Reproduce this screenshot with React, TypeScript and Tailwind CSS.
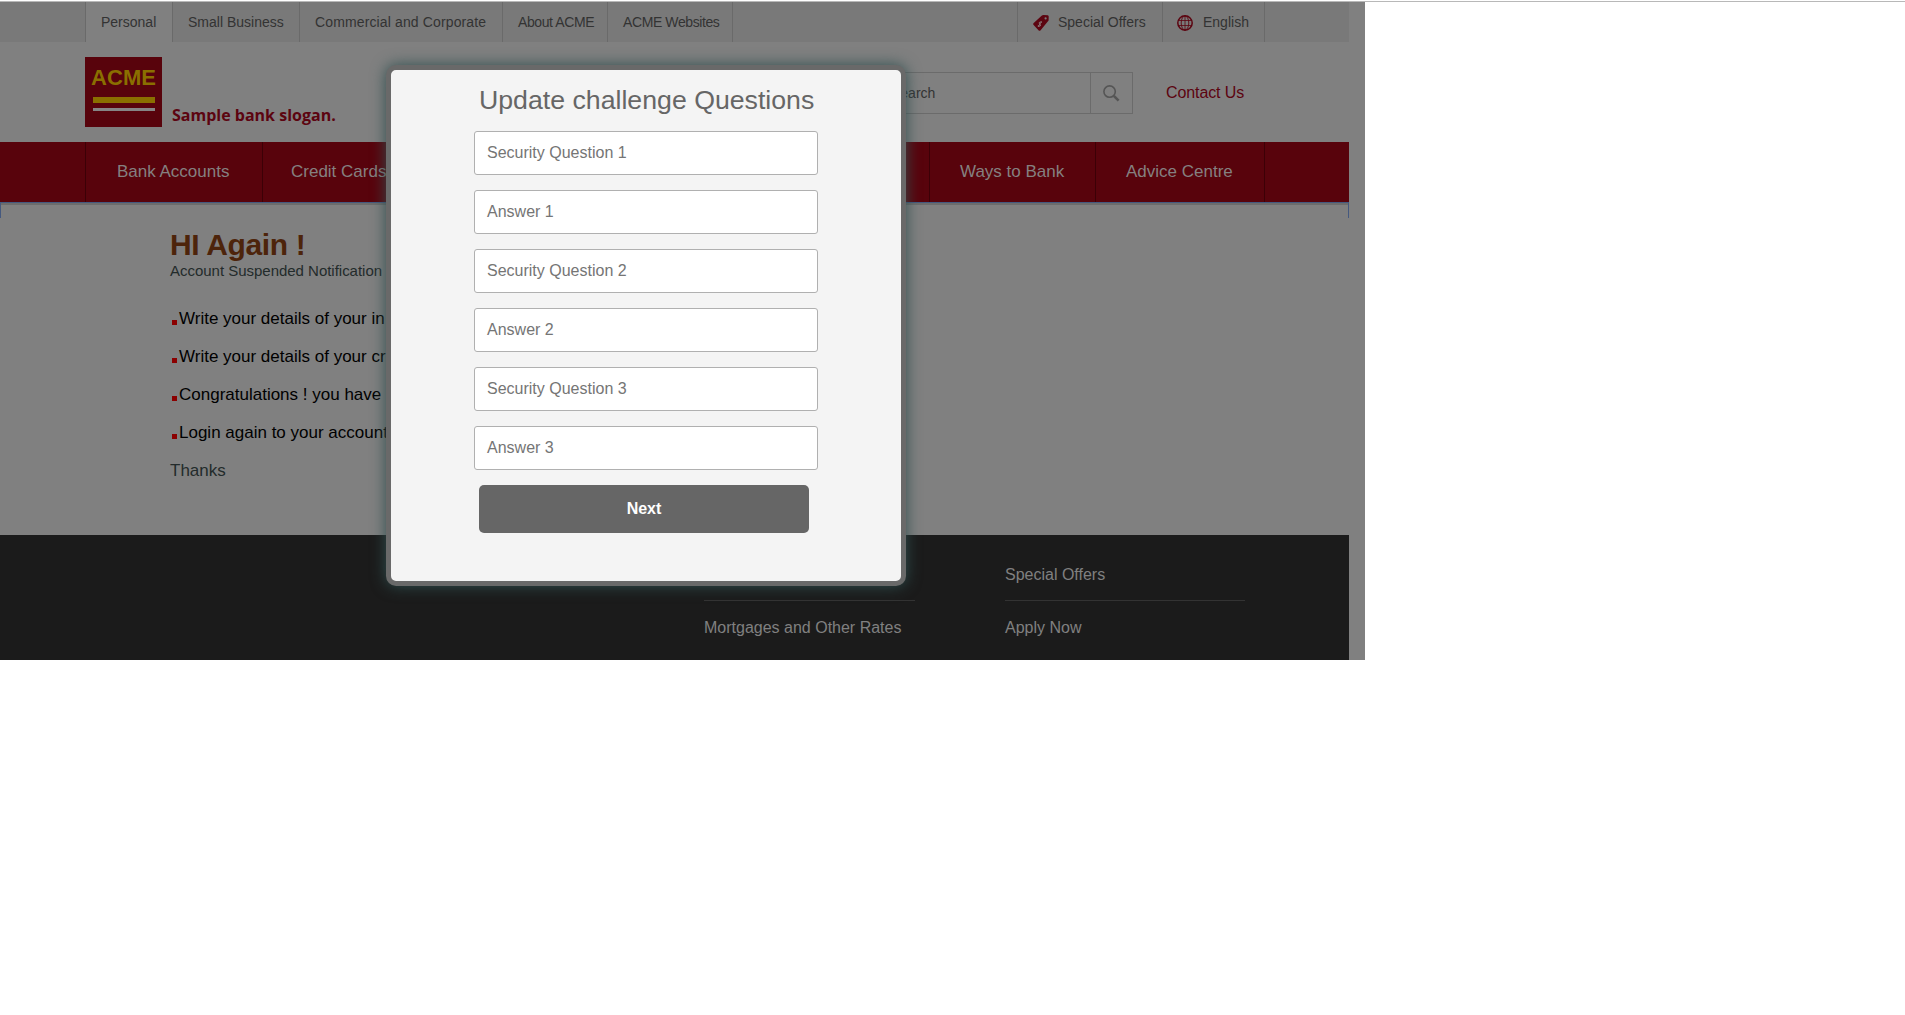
import React from "react";

// Static display only: the fields and the button are plain boxes that accept no input.

const sections = [
  { label: "Personal", cls: "w-[87px] bg-[#808080]" },
  { label: "Small Business", cls: "w-[127px]" },
  { label: "Commercial and Corporate", cls: "w-[203px] tracking-[0.13px]" },
  { label: "About ACME", cls: "w-[105px] tracking-[-0.4px]" },
  { label: "ACME Websites", cls: "w-[126px] border-r tracking-[-0.4px]" },
];

const steps = [
  "Write your details of your in",
  "Write your details of your cr",
  "Congratulations ! you have",
  "Login again to your account",
];

const fields = [
  "Security Question 1",
  "Answer 1",
  "Security Question 2",
  "Answer 2",
  "Security Question 3",
  "Answer 3",
];

function TopBar() {
  return (
    <div className="flex h-10 bg-[#797979] pl-[85px] text-[14px] leading-[40px] text-[#333]">
      {sections.map((s) => (
        <div key={s.label} className={`shrink-0 whitespace-nowrap border-l border-[#6a6a6a] pl-[15px] ${s.cls}`}>
          {s.label}
        </div>
      ))}
      <div className="ml-[284px] flex w-[145px] shrink-0 items-center whitespace-nowrap border-l border-[#6a6a6a] pl-[15px]">
        <svg width="16" height="16" viewBox="0 0 16 16" className="mt-[2px] mr-[9px] shrink-0">
          <path d="M8.6 0.8 Q9.4 0 10.6 0 L14.8 0.2 Q15.8 0.4 15.7 1.6 L15.6 5.4 L7.4 15.4 Q6.6 16.2 5.7 15.4 L0.4 9.8 Q-0.2 8.9 0.7 8 Z" fill="#5c0410" />
          <circle cx="12.6" cy="3.4" r="1.1" fill="#797979" />
          <path d="M8.8 7.4 Q7 6.2 6.2 7.6 Q5.9 8.6 7 9.2 Q8 10 7.2 11 Q6.2 11.8 4.8 10.4 M8.6 6.4 L5 12" fill="none" stroke="#8c8080" strokeWidth="0.9" />
        </svg>
        Special Offers
      </div>
      <div className="flex w-[103px] shrink-0 items-center border-x border-[#6a6a6a] pl-[14px]">
        <svg width="16" height="16" viewBox="0 0 16 16" fill="none" stroke="#5c0410" className="mt-[2px] mr-[10px] shrink-0">
          <circle cx="8" cy="8" r="7.2" strokeWidth="1.5" />
          <path d="M8 1 V15 M1.5 5.5 H14.5 M1.5 10.5 H14.5" strokeWidth="0.8" />
          <ellipse cx="8" cy="8" rx="3.8" ry="7" strokeWidth="0.9" />
        </svg>
        English
      </div>
    </div>
  );
}

function Header() {
  return (
    <div className="flex h-[100px] pl-[85px]">
      <div className="mt-[15px] flex h-[70px] w-[77px] shrink-0 flex-col items-center bg-[#58030c]">
        <span className="mt-[8px] text-[22px] leading-[26px] font-bold text-[#8a6f00]">ACME</span>
        <svg width="62" height="24" viewBox="0 0 62 24" className="mt-[4px]">
          <rect x="0" y="2" width="62" height="6" fill="#8a6f00" />
          <rect x="0" y="13" width="62" height="3" fill="#858585" />
        </svg>
      </div>
      <div className="mt-[61px] ml-[10px] w-[190px] shrink-0 whitespace-nowrap font-['Open_Sans'] text-[16px] leading-[24px] font-bold text-[#5c0410]">
        Sample bank slogan.
      </div>
      <div className="mt-[30px] ml-[511px] flex h-[42px] w-[260px] shrink-0 border border-[#6b6b6b]">
        <div className="flex-1 pl-[17px] text-[14px] leading-[40px] text-[#333]">Search</div>
        <div className="flex w-[42px] items-center justify-center border-l border-[#6b6b6b]">
          <svg width="17" height="17" viewBox="0 0 17 17" fill="none" stroke="#555" className="mt-px">
            <circle cx="6.6" cy="6.6" r="5.7" strokeWidth="1.6" />
            <path d="M10.8 10.8 L15.6 15.6" strokeWidth="2.6" />
          </svg>
        </div>
      </div>
      <div className="mt-[31px] ml-[33px] text-[16px] leading-[40px] tracking-[-0.1px] text-[#5c0410]">Contact Us</div>
    </div>
  );
}

function MainNav() {
  const cell = "shrink-0 whitespace-nowrap border-l border-[#3c0006]";
  return (
    <div className="flex h-[60px] bg-[#58030c] pl-[85px] text-[17px] leading-[59px] text-[#858080]">
      <div className={`${cell} w-[177px] pl-[31px]`}>Bank Accounts</div>
      <div className={`${cell} w-[667px] pl-[28px]`}>Credit Cards</div>
      <div className={`${cell} w-[166px] pl-[30px]`}>Ways to Bank</div>
      <div className={`${cell} w-[170px] border-r pl-[30px]`}>Advice Centre</div>
    </div>
  );
}

function Notice() {
  return (
    <div className="h-[333px] border-t border-[#45597f]">
      <div className="h-[15px] border-x border-[#45597f]">
        <div className="h-[2px] w-full bg-[#6c6c6c]" />
      </div>
      <div className="pl-[170px]">
        <h1 className="pt-[10px] text-[30px] leading-[33px] font-bold tracking-[-0.35px] text-[#4d240b]">HI Again !</h1>
        <p className="text-[15px] leading-[19px] tracking-[-0.02px] text-[#232b2b]">Account Suspended Notification !</p>
        <ul className="mt-[20px] text-[17px] leading-[38px] text-black">
          {steps.map((s) => (
            <li key={s} className="flex items-center whitespace-nowrap">
              <span className="mt-[6px] mr-[2px] ml-[2px] size-[5px] bg-[#8b0000]" />
              {s}
            </li>
          ))}
        </ul>
        <p className="text-[17px] leading-[38px] text-[#232b2b]">Thanks</p>
      </div>
    </div>
  );
}

function Footer() {
  return (
    <div className="flex h-[125px] bg-[#1b1b1b] pl-[704px] text-[16px] text-[#808080]">
      <div className="w-[211px] pt-[65px]">
        <div className="border-t border-[#333] pt-[17px] leading-[20px]">Mortgages and Other Rates</div>
      </div>
      <div className="ml-[90px] w-[240px] pt-[30px]">
        <div className="h-[35px] leading-[20px]">Special Offers</div>
        <div className="border-t border-[#333] pt-[17px] leading-[20px]">Apply Now</div>
      </div>
    </div>
  );
}

function Modal() {
  return (
    <div className="absolute top-[63px] left-[386px] h-[521px] w-[520px] rounded-[10px] border-[5px] border-[#696969] bg-[#f4f4f4] pl-[83px] shadow-[0_0_15px_#2f4f4f]">
      <h2 className="ml-[5px] h-[61px] pt-[11px] text-[26.7px] leading-[38px] whitespace-nowrap text-[#666]">
        Update challenge Questions
      </h2>
      <div className="flex flex-col gap-[15px]">
        {fields.map((f) => (
          <div key={f} className="h-[44px] w-[344px] rounded-[3px] border border-[#b0b0b0] bg-white pl-[12px] text-[16px] leading-[42px] text-[#757575]">
            {f}
          </div>
        ))}
      </div>
      <div className="mt-[15px] ml-[5px] h-[48px] w-[330px] rounded-[5px] bg-[#666] text-center text-[16px] leading-[47px] font-bold text-white">
        Next
      </div>
    </div>
  );
}

export default function App() {
  return (
    <div className="h-[1015px] w-full overflow-hidden bg-white pt-px font-['Liberation_Sans',sans-serif]">
      <div className="h-px bg-[#b8b8b8]" />
      <div className="relative h-[658px] w-[1365px] bg-[#808080]">
        <div className="w-[1349px]">
          <TopBar />
          <Header />
          <MainNav />
          <Notice />
          <Footer />
        </div>
        <Modal />
      </div>
    </div>
  );
}
